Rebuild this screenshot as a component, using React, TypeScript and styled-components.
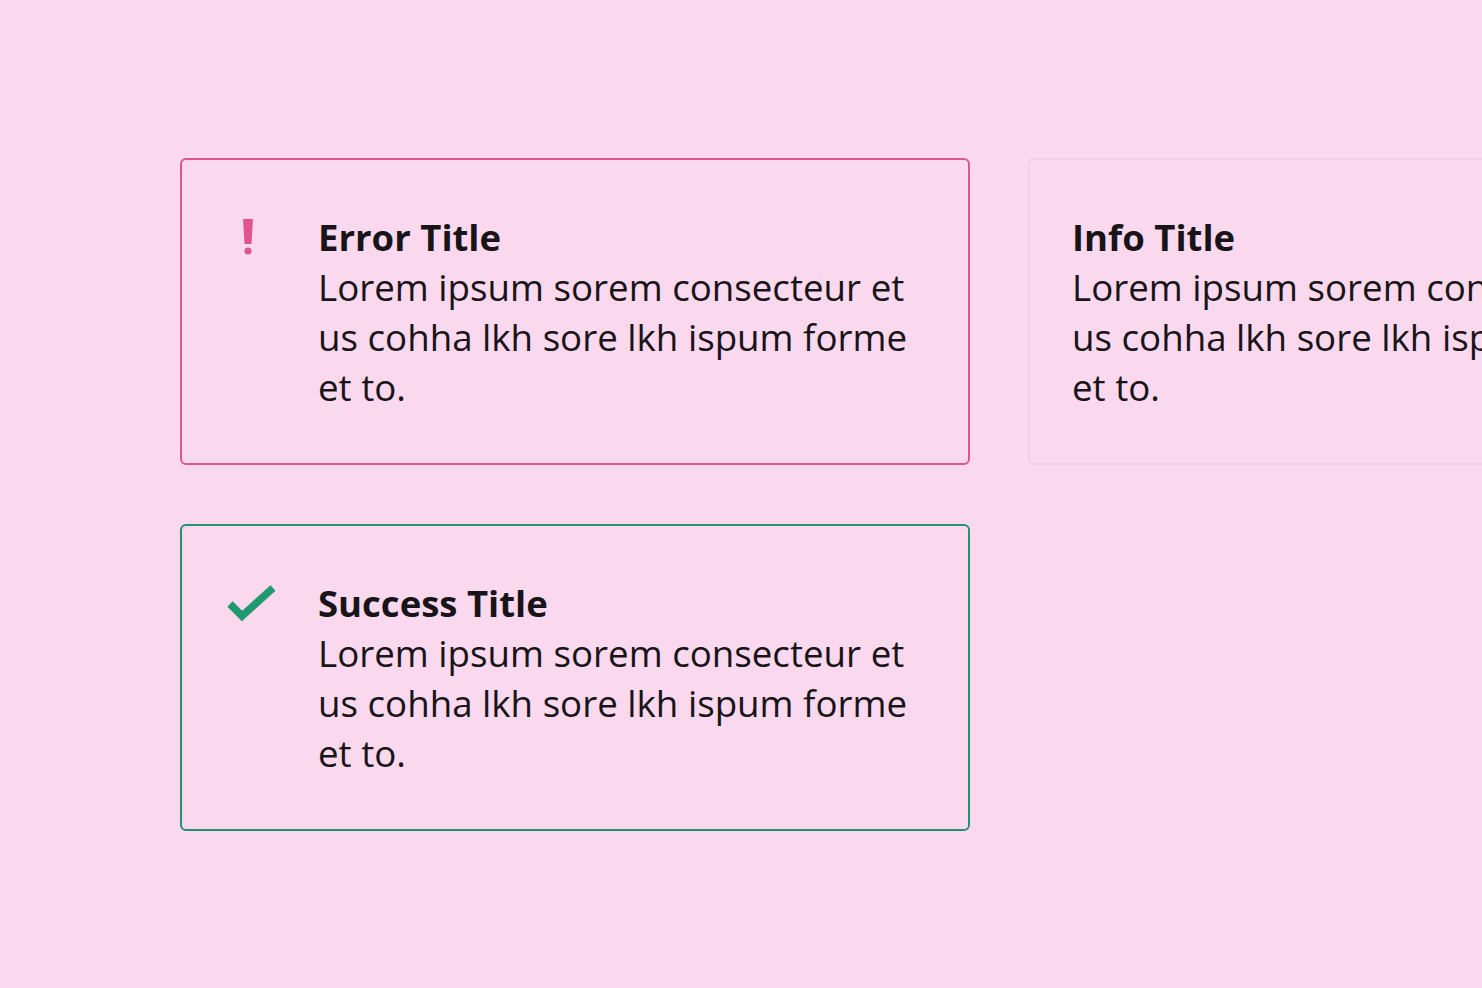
import styled, { createGlobalStyle } from 'styled-components'

const GlobalStyle = createGlobalStyle`
	html, body {
		margin: 0;
		padding: 0;
		background-color: #fad9ef;
		overflow: hidden;
	}
	body {
		font-family: "Open Sans", "Noto Sans", sans-serif;
	}
`

const Page = styled.div`
	width: 1482px;
	height: 988px;
	padding: 158px 0 0 180px;
	box-sizing: border-box;
	overflow: hidden;
`

const Grid = styled.div`
	display: grid;
	grid-template-columns: 790px 790px;
	grid-auto-rows: 307px;
	column-gap: 58px;
	row-gap: 59px;
`

type Kind = 'error' | 'info' | 'success'

const borders: Record<Kind, string> = {
	error: '#e0558f',
	info: '#f3cfe5',
	success: '#23936f',
}

const Card = styled.div<{ $kind: Kind }>`
	display: flex;
	align-items: flex-start;
	box-sizing: border-box;
	border: 2px solid ${({ $kind }) => borders[$kind]};
	border-radius: 6px;
	padding: 52px 50px 48px 42px;
`

const IconSlot = styled.div`
	width: 94px;
	flex-shrink: 0;
	height: 50px;
	display: flex;
	align-items: center;
`

const Body = styled.div`
	color: #181418;
	font-size: 36.5px;
	line-height: 50px;
	max-width: 605px;
`

const Title = styled.div`
	font-weight: 700;
`

const Text = styled.div`
	font-weight: 400;
	font-size: 36.7px;
`

const Bang = () => (
	<svg width="12" height="40" viewBox="0 0 12 40" style={{ marginLeft: 18 }}>
		<path d="M1 2 L11 2 L9.5 27 L2.5 27 Z" fill="#e0558f" />
		<circle cx="6" cy="34" r="3.6" fill="#e0558f" />
	</svg>
)

const Check = () => (
	<svg width="50" height="40" viewBox="0 0 50 40" style={{ marginLeft: 3 }}>
		<path d="M3 21 L15 33 L46 5" fill="none" stroke="#1f9a6e" strokeWidth="7.5" strokeLinecap="butt" strokeLinejoin="miter" />
	</svg>
)

const LOREM = 'Lorem ipsum sorem consecteur et us cohha lkh sore lkh ispum forme et to.'

const Alert = ({ kind, title }: { kind: Kind, title: string }) => (
	<Card $kind={kind}>
		{kind === 'error' && <IconSlot><Bang /></IconSlot>}
		{kind === 'success' && <IconSlot><Check /></IconSlot>}
		<Body>
			<Title>{title}</Title>
			<Text>{LOREM}</Text>
		</Body>
	</Card>
)

export default function App() {
	return <>
		<GlobalStyle />
		<Page>
			<Grid>
				<Alert kind="error" title="Error Title" />
				<Alert kind="info" title="Info Title" />
				<Alert kind="success" title="Success Title" />
			</Grid>
		</Page>
	</>
}
